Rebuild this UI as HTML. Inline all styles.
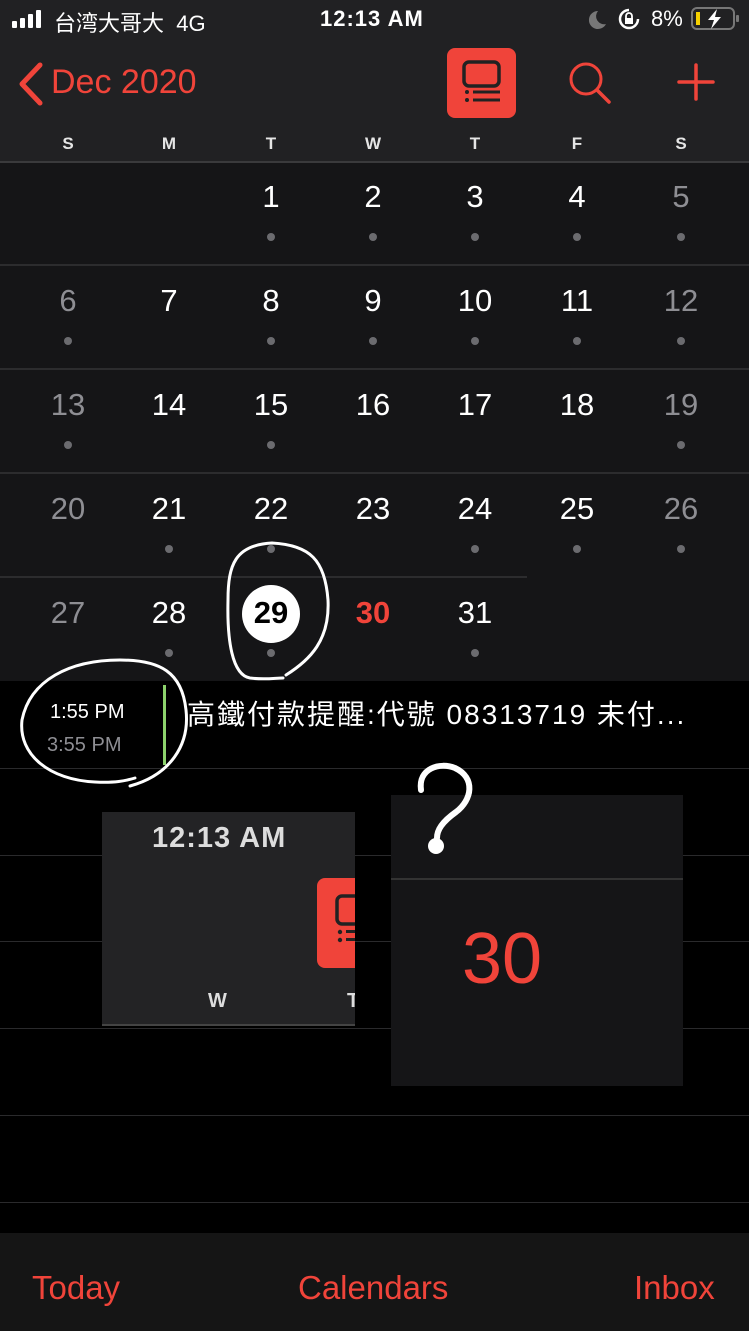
<!DOCTYPE html>
<html><head><meta charset="utf-8"><style>
*{margin:0;padding:0;box-sizing:border-box}
body{width:749px;height:1331px;background:#000;position:relative;overflow:hidden;font-family:"Liberation Sans","Noto Sans CJK TC",sans-serif;color:#fff}
.a{position:absolute}
.hdr{left:0;top:0;width:749px;height:161px;background:#212123}
.grid{left:0;top:161px;width:749px;height:520px;background:#151517}
.hl{position:absolute;left:0;height:2px;background:#2c2c2e}
.n{position:absolute;width:102px;text-align:center;font-size:31px;line-height:36px}
.g{color:#8e8e93}
.d{position:absolute;width:8px;height:8px;border-radius:4px;background:#6b6b6f}
.wd{position:absolute;top:134px;width:102px;text-align:center;font-size:17px;font-weight:bold;color:#e5e5e5}
.ll{position:absolute;left:0;width:749px;height:1px;background:#2a2a2c}
.red{color:#f0443a}
</style></head><body>
<div class="a hdr"></div>
<svg class="a" style="left:12px;top:9px" width="36" height="20"><rect x="0" y="12" width="5" height="7" rx="1" fill="#fff"/><rect x="8" y="9" width="5" height="10" rx="1" fill="#fff"/><rect x="16" y="5" width="5" height="14" rx="1" fill="#fff"/><rect x="24" y="1" width="5" height="18" rx="1" fill="#fff"/></svg>
<div class="a" style="left:54px;top:6px;font-size:22px;">台湾大哥大&nbsp;&nbsp;4G</div>
<div class="a" style="left:320px;top:6px;font-size:22px;font-weight:bold;letter-spacing:1px">12:13 AM</div>
<svg class="a" style="left:586px;top:9px" width="24" height="22"><path d="M12 2 A9 9 0 1 0 20 15 A8 8 0 0 1 12 2Z" fill="#777"/></svg>
<svg class="a" style="left:618px;top:8px" width="22" height="22"><path d="M11 2 A9 9 0 1 0 20 11" stroke="#fff" stroke-width="2.5" fill="none"/><rect x="7" y="10" width="8" height="6" fill="#fff"/><path d="M8 10 V8 a3 3 0 0 1 6 0 V10" stroke="#fff" stroke-width="1.8" fill="none"/></svg>
<div class="a" style="left:651px;top:6px;font-size:22px">8%</div>
<svg class="a" style="left:690px;top:6px" width="50" height="26"><rect x="2" y="2" width="42" height="21" rx="5" stroke="#777" stroke-width="2" fill="none"/><rect x="6" y="6" width="4" height="13" fill="#f5d000"/><rect x="46" y="9" width="3" height="7" rx="1" fill="#777"/><path d="M27 3 L18 14 H24 L21 23 L31 11 H25 Z" fill="#fff"/></svg>
<svg class="a" style="left:16px;top:62px" width="28" height="44"><path d="M24 3 L6 22 L24 41" stroke="#f0443a" stroke-width="5" fill="none" stroke-linecap="round" stroke-linejoin="round"/></svg>
<div class="a red" style="left:51px;top:63px;font-size:34px">Dec 2020</div>
<div class="a" style="left:447px;top:48px;width:69px;height:70px;border-radius:8px;background:#f0443a"></div>
<svg class="a" style="left:447px;top:48px" width="69" height="70"><rect x="17" y="14" width="35" height="24" rx="5" stroke="#222" stroke-width="3.5" fill="none"/><circle cx="20" cy="44" r="2" fill="#222"/><circle cx="20" cy="52" r="2" fill="#222"/><rect x="26" y="42.5" width="27" height="3" fill="#222"/><rect x="26" y="50.5" width="27" height="3" fill="#222"/></svg>
<svg class="a" style="left:565px;top:58px" width="50" height="50"><circle cx="21" cy="21" r="15" stroke="#f0443a" stroke-width="3" fill="none"/><path d="M32 32 L44 44" stroke="#f0443a" stroke-width="3.5" stroke-linecap="round"/></svg>
<svg class="a" style="left:676px;top:62px" width="40" height="40"><path d="M20 3 V37 M3 20 H37" stroke="#f0443a" stroke-width="3.5" stroke-linecap="round"/></svg>
<div class="wd g" style="left:17px">S</div><div class="wd" style="left:118px">M</div><div class="wd" style="left:220px">T</div><div class="wd" style="left:322px">W</div><div class="wd" style="left:424px">T</div><div class="wd" style="left:526px">F</div><div class="wd g" style="left:630px">S</div>
<div class="a grid">
<div class="hl" style="top:0;width:749px;background:#3a3a3c"></div>
<div class="hl" style="top:103px;width:749px"></div>
<div class="hl" style="top:207px;width:749px"></div>
<div class="hl" style="top:311px;width:749px"></div>
<div class="hl" style="top:415px;width:527px"></div>
<div class="n" style="left:220px;top:18px">1</div><div class="n" style="left:322px;top:18px">2</div><div class="n" style="left:424px;top:18px">3</div><div class="n" style="left:526px;top:18px">4</div><div class="n g" style="left:630px;top:18px">5</div>
<div class="d" style="left:267px;top:72px"></div><div class="d" style="left:369px;top:72px"></div><div class="d" style="left:471px;top:72px"></div><div class="d" style="left:573px;top:72px"></div><div class="d" style="left:677px;top:72px"></div>
<div class="n g" style="left:17px;top:122px">6</div><div class="n" style="left:118px;top:122px">7</div><div class="n" style="left:220px;top:122px">8</div><div class="n" style="left:322px;top:122px">9</div><div class="n" style="left:424px;top:122px">10</div><div class="n" style="left:526px;top:122px">11</div><div class="n g" style="left:630px;top:122px">12</div>
<div class="d" style="left:64px;top:176px"></div><div class="d" style="left:267px;top:176px"></div><div class="d" style="left:369px;top:176px"></div><div class="d" style="left:471px;top:176px"></div><div class="d" style="left:573px;top:176px"></div><div class="d" style="left:677px;top:176px"></div>
<div class="n g" style="left:17px;top:226px">13</div><div class="n" style="left:118px;top:226px">14</div><div class="n" style="left:220px;top:226px">15</div><div class="n" style="left:322px;top:226px">16</div><div class="n" style="left:424px;top:226px">17</div><div class="n" style="left:526px;top:226px">18</div><div class="n g" style="left:630px;top:226px">19</div>
<div class="d" style="left:64px;top:280px"></div><div class="d" style="left:267px;top:280px"></div><div class="d" style="left:677px;top:280px"></div>
<div class="n g" style="left:17px;top:330px">20</div><div class="n" style="left:118px;top:330px">21</div><div class="n" style="left:220px;top:330px">22</div><div class="n" style="left:322px;top:330px">23</div><div class="n" style="left:424px;top:330px">24</div><div class="n" style="left:526px;top:330px">25</div><div class="n g" style="left:630px;top:330px">26</div>
<div class="d" style="left:165px;top:384px"></div><div class="d" style="left:267px;top:384px"></div><div class="d" style="left:471px;top:384px"></div><div class="d" style="left:573px;top:384px"></div><div class="d" style="left:677px;top:384px"></div>
<div class="n g" style="left:17px;top:434px">27</div><div class="n" style="left:118px;top:434px">28</div>
<div style="position:absolute;left:242px;top:424px;width:58px;height:58px;border-radius:29px;background:#fff"></div>
<div class="n" style="left:220px;top:434px;color:#000;font-weight:bold">29</div>
<div class="n red" style="left:322px;top:434px;font-weight:bold">30</div><div class="n" style="left:424px;top:434px">31</div>
<div class="d" style="left:165px;top:488px"></div><div class="d" style="left:267px;top:488px"></div><div class="d" style="left:471px;top:488px"></div>
</div>
<div class="ll" style="top:768px"></div><div class="ll" style="top:855px"></div><div class="ll" style="top:941px"></div><div class="ll" style="top:1028px"></div><div class="ll" style="top:1115px"></div><div class="ll" style="top:1202px"></div>
<div class="a" style="left:50px;top:701px;font-size:20px">1:55 PM</div>
<div class="a g" style="left:47px;top:734px;font-size:20px">3:55 PM</div>
<div class="a" style="left:163px;top:685px;width:3px;height:80px;background:#8cd26c"></div>
<div class="a" style="left:187px;top:693px;font-size:28px;letter-spacing:2px;white-space:nowrap">高鐵付款提醒:代號 08313719 未付...</div>
<div class="a" style="left:102px;top:812px;width:253px;height:214px;background:#232325;border-bottom:2px solid #444"></div>
<div class="a" style="left:152px;top:822px;font-size:29px;font-weight:bold;color:#ddd;letter-spacing:1px">12:13 AM</div>
<div class="a" style="left:317px;top:878px;width:38px;height:90px;background:#f0443a;border-radius:8px 0 0 8px"></div>
<svg class="a" style="left:317px;top:878px" width="38" height="90"><rect x="20" y="18" width="30" height="28" rx="5" stroke="#222" stroke-width="3.5" fill="none"/><circle cx="23" cy="54" r="2.2" fill="#222"/><circle cx="23" cy="62" r="2.2" fill="#222"/><rect x="29" y="52" width="12" height="3" fill="#222"/><rect x="29" y="60" width="12" height="3" fill="#222"/></svg>
<div class="a" style="left:208px;top:990px;font-size:20px;font-weight:bold;color:#ddd">W</div>
<div class="a" style="left:347px;top:990px;width:8px;overflow:hidden;font-size:20px;font-weight:bold;color:#ddd">T</div>
<div class="a" style="left:391px;top:795px;width:292px;height:291px;background:#151517"></div>
<div class="a" style="left:391px;top:878px;width:292px;height:2px;background:#333"></div>
<div class="a red" style="left:462px;top:918px;font-size:72px">30</div>
<svg class="a" style="left:0;top:0" width="749" height="1331">
<g stroke="#fff" stroke-width="3" fill="none" stroke-linecap="round">
<path d="M286 675 C310 660 330 640 328 600 C325 560 310 545 272 543 C235 545 228 565 228 600 C227 640 232 675 250 678 C265 680 275 678 283 678"/>
<path d="M130 786 C170 775 190 745 186 710 C182 672 160 660 120 660 C70 660 30 680 22 720 C18 755 50 780 95 782 C115 783 125 781 135 778"/>
<path stroke-width="6" d="M421 790 C418 768 440 762 455 768 C476 778 472 800 456 812 C442 822 437 830 437 838"/>
</g>
<circle cx="436" cy="846" r="8" fill="#fff"/>
</svg>
<div class="a" style="left:0;top:1233px;width:749px;height:98px;background:#151515"></div>
<div class="a red" style="left:32px;top:1269px;font-size:33px">Today</div>
<div class="a red" style="left:298px;top:1269px;font-size:33px">Calendars</div>
<div class="a red" style="left:634px;top:1269px;font-size:33px">Inbox</div>
</body></html>
